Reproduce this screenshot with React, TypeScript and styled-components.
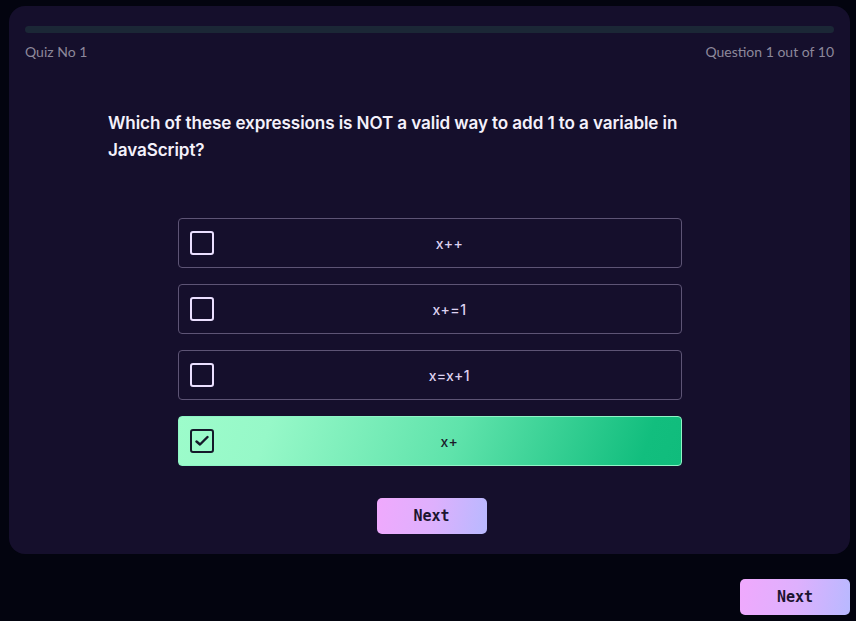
import React, { useState } from "react";
import styled, { createGlobalStyle } from "styled-components";

const Global = createGlobalStyle`
  html, body { margin: 0; padding: 0; background: #03040f; }
  body { font-family: Inter, "Noto Sans", sans-serif; }
  * { box-sizing: border-box; }
`;

const Page = styled.div`
  min-height: 621px;
  padding: 6px 6px 0 9px;
  display: flex;
  flex-direction: column;
  align-items: stretch;
`;

const Card = styled.section`
  background: #150f2c;
  border-radius: 16px;
  padding: 20px 16px 20px;
  display: flex;
  flex-direction: column;
`;

const Progress = styled.div`
  height: 7px;
  border-radius: 4px;
  background: #1b2736;
`;

const MetaRow = styled.div`
  display: flex;
  justify-content: space-between;
  margin-top: 10px;
  font-family: Lato, "Open Sans", sans-serif;
  font-size: 14px;
  color: #8d889b;
  line-height: 17px;
`;

const Question = styled.h2`
  width: 590px;
  margin: 49px 0 0 83px;
  font-family: Inter, sans-serif;
  font-weight: 600;
  font-size: 17.1px;
  letter-spacing: -0.1px;
  line-height: 27px;
  color: #f4f1fb;
`;

const Options = styled.div`
  width: 504px;
  margin: 55px auto 0;
  display: flex;
  flex-direction: column;
  gap: 16px;
`;

const Option = styled.button<{ $selected: boolean }>`
  height: 50px;
  border-radius: 4px;
  border: 1px solid ${(p) => (p.$selected ? "#8ff5c6" : "#5d5475")};
  background: ${(p) =>
    p.$selected
      ? "linear-gradient(110deg, #9dfccb 0%, #96f8c8 18%, #5fe3ab 55%, #12be7e 92%, #10bc7c 100%)"
      : "#150f2c"};
  display: flex;
  align-items: center;
  padding: 0 11px;
  cursor: pointer;
  font-family: Inter, sans-serif;
  font-weight: 500;
  font-size: 14px;
  letter-spacing: 0.5px;
  color: ${(p) => (p.$selected ? "#1b1a2b" : "#ddd2f0")};
`;

const Label = styled.span`
  flex: 1;
  text-align: center;
  padding-left: 16px;
`;

const Box = styled.span<{ $checked: boolean }>`
  flex: none;
  width: 24px;
  height: 24px;
  border-radius: 3px;
  border: 2.5px solid ${(p) => (p.$checked ? "#15192a" : "#ebdfff")};
  display: flex;
  align-items: center;
  justify-content: center;
`;

const NextButton = styled.button`
  width: 110px;
  height: 36px;
  border: none;
  border-radius: 5px;
  background: linear-gradient(100deg, #f0a9fd 0%, #deb0fd 50%, #b8b9ff 100%);
  font-family: "DejaVu Sans Mono", "Liberation Mono", monospace;
  font-weight: bold;
  font-size: 15px;
  color: #1c1530;
  cursor: pointer;
`;

const CardFooter = styled.div`
  display: flex;
  justify-content: center;
  margin-top: 32px;
  padding-left: 4px;
`;

const PageFooter = styled.div`
  display: flex;
  justify-content: flex-end;
  margin-top: 25px;
`;

const options = ["x++", "x+=1", "x=x+1", "x+"];

export default function App() {
  const [sel, setSel] = useState(3);
  return (
    <>
      <Global />
      <Page>
        <Card>
          <Progress />
          <MetaRow>
            <span>Quiz No 1</span>
            <span>Question 1 out of 10</span>
          </MetaRow>
          <Question>
            Which of these expressions is NOT a valid way to add 1 to a variable in JavaScript?
          </Question>
          <Options>
            {options.map((o, i) => (
              <Option key={o} $selected={sel === i} onClick={() => setSel(i)}>
                <Box $checked={sel === i}>
                  {sel === i && (
                    <svg width="14" height="12" viewBox="0 0 14 12">
                      <path d="M1.5 6.5 L5 9.5 L12.5 2" fill="none" stroke="#15192a" strokeWidth="2.4" strokeLinecap="round" strokeLinejoin="round" />
                    </svg>
                  )}
                </Box>
                <Label>{o}</Label>
              </Option>
            ))}
          </Options>
          <CardFooter>
            <NextButton>Next</NextButton>
          </CardFooter>
        </Card>
        <PageFooter>
          <NextButton>Next</NextButton>
        </PageFooter>
      </Page>
    </>
  );
}
